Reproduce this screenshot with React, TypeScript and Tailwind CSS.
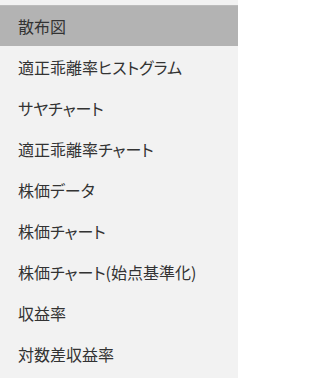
const items = [
  "散布図",
  "適正乖離率ヒストグラム",
  "サヤチャート",
  "適正乖離率チャート",
  "株価データ",
  "株価チャート",
  "株価チャート(始点基準化)",
  "収益率",
  "対数差収益率",
];

export default function App() {
  return (
    <div className="w-[238px] h-[378px] bg-[#f2f2f2] pt-[5px] font-['Noto_Sans_CJK_JP',sans-serif] [font-feature-settings:'palt'] text-[16px] text-[#333333]">
      <ul>
        {items.map((item, i) => (
          <li
            key={item}
            className={
              i === 0
                ? "h-[41px] flex items-center pl-[18px] bg-[#b3b3b3] border-t border-[#bcbcbc]"
                : "h-[41px] flex items-center pl-[18px]"
            }
          >
            {item}
          </li>
        ))}
      </ul>
    </div>
  );
}
